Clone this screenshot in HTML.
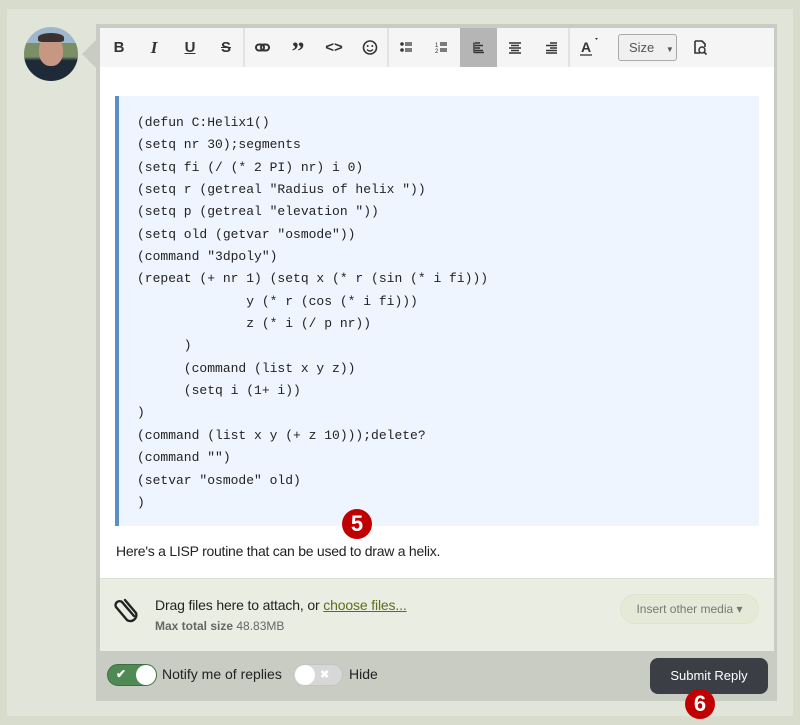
<!DOCTYPE html>
<html><head><style>
*{margin:0;padding:0;box-sizing:border-box}
body{width:800px;height:725px;background:#d8dccd;position:relative;overflow:hidden;font-family:"Liberation Sans",sans-serif}
.abs{position:absolute}
.panel{left:7px;top:9px;width:786px;height:707px;background:#e1e4d8}
.frame{left:96px;top:24px;width:681px;height:677px;background:#c9ccc3}
.tb{left:100px;top:28px;width:674px;height:39px;background:#f5f5f5}
.ic{position:absolute;top:28px;height:39px;width:36px;text-align:center;line-height:39px;font-size:15px;color:#333;font-weight:bold}
.sv{position:absolute;top:28px;width:36px;height:39px}
.sep{position:absolute;top:28px;width:2px;height:39px;background:#e2e2e2}
.content{left:100px;top:67px;width:674px;height:511px;background:#fff}
.code{left:115px;top:96px;width:644px;height:430px;background:#eef5fe;border-left:4px solid #5a8fc8}
pre{position:absolute;left:137px;top:112px;font-family:"Liberation Mono",monospace;font-size:13px;line-height:22.35px;color:#222}
.att{left:100px;top:578px;width:674px;height:73px;background:#eaede2;border-top:1px solid #dde0d5}
.foot{left:100px;top:651px;width:674px;height:49px;background:#c9ccc3}
</style></head><body>
<div class="abs panel"></div>
<div class="abs frame"></div>
<div class="abs" style="left:24px;top:27px;width:54px;height:54px;border-radius:50%;background:linear-gradient(180deg,#9db8cc 0 30%,#7a8f66 30% 55%,#1f2a38 62%);overflow:hidden">
<div class="abs" style="left:15px;top:9px;width:24px;height:30px;border-radius:45%;background:#c69884"></div>
<div class="abs" style="left:14px;top:6px;width:26px;height:9px;border-radius:50% 50% 20% 20%;background:#3a3230"></div>
</div>
<div class="abs" style="left:82px;top:40px;width:0;height:0;border-top:14px solid transparent;border-bottom:14px solid transparent;border-right:14px solid #c9ccc3"></div>
<div class="abs tb"></div>
<div class="ic" style="left:101px">B</div>
<div class="ic" style="left:136px;font-style:italic;font-family:'Liberation Serif',serif;font-size:17px">I</div>
<div class="ic" style="left:172px;text-decoration:underline">U</div>
<div class="ic" style="left:208px;text-decoration:line-through">S</div>
<div class="sep" style="left:243px"></div>
<svg class="sv" style="left:245px" viewBox="0 0 36 39"><rect x="11" y="16.5" width="8" height="6" rx="3" fill="none" stroke="#333" stroke-width="2"/><rect x="16" y="16.5" width="8" height="6" rx="3" fill="none" stroke="#333" stroke-width="2"/></svg>
<div class="ic" style="left:280px;font-size:26px;font-family:'Liberation Serif',serif;line-height:48px">”</div>
<div class="ic" style="left:316px">&lt;&gt;</div>
<svg class="sv" style="left:352px" viewBox="0 0 36 39"><circle cx="18" cy="19.5" r="6.5" fill="none" stroke="#333" stroke-width="1.6"/><circle cx="15.7" cy="18" r="1" fill="#333"/><circle cx="20.3" cy="18" r="1" fill="#333"/><path d="M15 21.5q3 3 6 0" fill="none" stroke="#333" stroke-width="1.3"/></svg>
<div class="sep" style="left:387px"></div>
<svg class="sv" style="left:389px" viewBox="0 0 36 39"><circle cx="13" cy="16" r="1.8" fill="#333"/><circle cx="13" cy="22" r="1.8" fill="#333"/><path d="M16 15h7M16 17h7M16 21h7M16 23h7" stroke="#333" stroke-width="1.2"/></svg>
<svg class="sv" style="left:424px" viewBox="0 0 36 39"><text x="11" y="19" font-size="6" font-family="Liberation Sans" fill="#333">1</text><text x="11" y="25" font-size="6" font-family="Liberation Sans" fill="#333">2</text><path d="M16 15h7M16 17h7M16 21h7M16 23h7" stroke="#333" stroke-width="1.2"/></svg>
<div class="abs" style="left:460px;top:28px;width:37px;height:39px;background:#b5b5b5"></div>
<svg class="sv" style="left:461px" viewBox="0 0 36 39"><path d="M13 14.5v10M14 15h5M14 17.5h8M14 20h5M14 22.5h8" stroke="#333" stroke-width="1.4"/><path d="M13 24.5h10" stroke="#333" stroke-width="1.4"/></svg>
<svg class="sv" style="left:497px" viewBox="0 0 36 39"><path d="M12 15h12M14 17.5h8M12 20h12M14 22.5h8M12 25h12" stroke="#333" stroke-width="1.4"/></svg>
<svg class="sv" style="left:533px" viewBox="0 0 36 39"><path d="M17 15h7M13 17.5h11M17 20h7M13 22.5h11M13 25h11" stroke="#333" stroke-width="1.4"/></svg>
<div class="sep" style="left:568px"></div>
<svg class="sv" style="left:571px" viewBox="0 0 36 39"><text x="10" y="24" font-size="14" font-weight="bold" font-family="Liberation Sans" fill="#333">A</text><path d="M9 27h12" stroke="#333" stroke-width="1.3"/><path d="M24 10l3 0-1.5 2z" fill="#333"/></svg>
<div class="abs" style="left:618px;top:34px;width:59px;height:27px;border:1px solid #aaa;border-radius:3px;background:#f0f0f0;font-size:13px;line-height:25px;padding-left:10px;color:#555">Size <span style="font-size:8px;margin-left:8px">▼</span></div>
<svg class="sv" style="left:683px" viewBox="0 0 36 39"><path d="M12 13h7l3 3v3M12 13v12h5" fill="none" stroke="#333" stroke-width="1.6"/><circle cx="19" cy="22" r="3" fill="none" stroke="#333" stroke-width="1.5"/><path d="M21 24l2.5 2.5" stroke="#333" stroke-width="1.6"/></svg>
<div class="abs content"></div>
<div class="abs code"></div>
<pre>(defun C:Helix1()
(setq nr 30);segments
(setq fi (/ (* 2 PI) nr) i 0)
(setq r (getreal "Radius of helix "))
(setq p (getreal "elevation "))
(setq old (getvar "osmode"))
(command "3dpoly")
(repeat (+ nr 1) (setq x (* r (sin (* i fi)))
              y (* r (cos (* i fi)))
              z (* i (/ p nr))
      )
      (command (list x y z))
      (setq i (1+ i))
)
(command (list x y (+ z 10)));delete?
(command "")
(setvar "osmode" old)
)</pre>
<div class="abs" style="left:342px;top:509px;width:30px;height:30px;border-radius:50%;background:#c00000;color:#fff;font-weight:bold;font-size:22px;text-align:center;line-height:30px">5</div>
<div class="abs" style="left:116px;top:543px;font-size:14px;letter-spacing:-0.25px;color:#222">Here's a LISP routine that can be used to draw a helix.</div>
<div class="abs att"></div>
<svg class="abs" style="left:112px;top:594px" width="30" height="32" viewBox="0 0 30 32"><path d="M22 22L10 8a4 4 0 0 0-6 5l11 13a6 6 0 0 0 9-7L13 6" fill="none" stroke="#222" stroke-width="2.4" stroke-linecap="round"/></svg>
<div class="abs" style="left:155px;top:597px;font-size:14px;letter-spacing:-0.15px;color:#222">Drag files here to attach, or <span style="color:#5a6e1e;text-decoration:underline">choose files...</span></div>
<div class="abs" style="left:155px;top:619px;font-size:12px;color:#666"><b>Max total size</b> 48.83MB</div>
<div class="abs" style="left:620px;top:594px;width:139px;height:30px;border:1px solid #dfe3cf;border-radius:15px;background:#e5e9d8;font-size:12px;color:#777;text-align:center;line-height:28px">Insert other media ▾</div>
<div class="abs foot"></div>
<div class="abs" style="left:107px;top:664px;width:50px;height:22px;border-radius:11px;background:#4f8a55;border:1px solid #3e6e44"></div>
<div class="abs" style="left:116px;top:667px;color:#fff;font-size:12px;font-weight:bold">✔</div>
<div class="abs" style="left:136px;top:665px;width:20px;height:20px;border-radius:50%;background:#fff"></div>
<div class="abs" style="left:162px;top:666px;font-size:14px;color:#222">Notify me of replies</div>
<div class="abs" style="left:293px;top:664px;width:50px;height:22px;border-radius:11px;background:#d7d7d7;border:1px solid #c4c4c4"></div>
<div class="abs" style="left:295px;top:665px;width:20px;height:20px;border-radius:50%;background:#fff"></div>
<div class="abs" style="left:320px;top:668px;color:#fff;font-size:11px;font-weight:bold">✖</div>
<div class="abs" style="left:349px;top:666px;font-size:14px;color:#222">Hide</div>
<div class="abs" style="left:650px;top:658px;width:118px;height:36px;border-radius:8px;background:#3b3e45;color:#fff;font-size:13px;text-align:center;line-height:36px">Submit Reply</div>
<div class="abs" style="left:685px;top:689px;width:30px;height:30px;border-radius:50%;background:#c00000;color:#fff;font-weight:bold;font-size:22px;text-align:center;line-height:30px">6</div>
</body></html>
